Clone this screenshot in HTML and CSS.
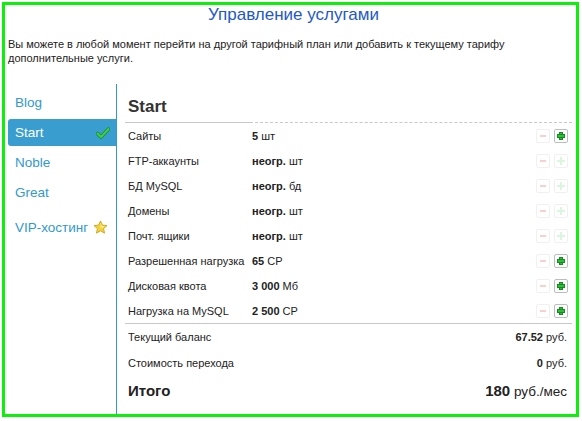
FILE: index.html
```html
<!DOCTYPE html>
<html>
<head>
<meta charset="utf-8">
<link rel="stylesheet" href="styles.css">
</head>
<body>
<div class="frame">
  <h1 class="title">Управление услугами</h1>
  <p class="intro">Вы можете в любой момент перейти на другой тарифный план или добавить к текущему тарифу дополнительные услуги.</p>
  <div class="main">
    <ul class="plans">
      <li class="plan">Blog</li>
      <li class="plan active">Start
        <svg class="check" width="14" height="12" viewBox="0 0 14 12"><path d="M1.5 6.5 L5 10 L12.5 2" fill="none" stroke="#1a8a2a" stroke-width="3.4" stroke-linecap="round" stroke-linejoin="round"/><path d="M1.5 6.5 L5 10 L12.5 2" fill="none" stroke="#3fd04a" stroke-width="2" stroke-linecap="round" stroke-linejoin="round"/></svg>
      </li>
      <li class="plan">Noble</li>
      <li class="plan">Great</li>
      <li class="plan vip">VIP-хостинг
        <svg class="star" width="15" height="15" viewBox="0 0 24 24"><path d="M12 1.5 L15.1 8.2 L22.4 8.9 L16.9 13.8 L18.5 21 L12 17.3 L5.5 21 L7.1 13.8 L1.6 8.9 L8.9 8.2 Z" fill="#f3d23c" stroke="#c9a218" stroke-width="1.4" stroke-linejoin="round"/><path d="M12 4.5 L14 9.6 L19 10 L15 13.3 L12 12 Z" fill="#fbef9a" opacity="0.8"/></svg>
      </li>
    </ul>
    <div class="content">
      <h2 class="plan-name">Start</h2>
      <div class="rule"><span class="solid"></span><span class="dashed"></span></div>
      <div class="rows">
        <div class="row"><span class="label">Сайты</span><span class="value"><b>5</b> шт</span><span class="btns"><span class="btn minus off"></span><span class="btn plus on"></span></span></div>
        <div class="row"><span class="label">FTP-аккаунты</span><span class="value"><b>неогр.</b> шт</span><span class="btns"><span class="btn minus off"></span><span class="btn plus off"></span></span></div>
        <div class="row"><span class="label">БД MySQL</span><span class="value"><b>неогр.</b> бд</span><span class="btns"><span class="btn minus off"></span><span class="btn plus off"></span></span></div>
        <div class="row"><span class="label">Домены</span><span class="value"><b>неогр.</b> шт</span><span class="btns"><span class="btn minus off"></span><span class="btn plus off"></span></span></div>
        <div class="row"><span class="label">Почт. ящики</span><span class="value"><b>неогр.</b> шт</span><span class="btns"><span class="btn minus off"></span><span class="btn plus off"></span></span></div>
        <div class="row"><span class="label">Разрешенная нагрузка</span><span class="value"><b>65</b> CP</span><span class="btns"><span class="btn minus off"></span><span class="btn plus on"></span></span></div>
        <div class="row"><span class="label">Дисковая квота</span><span class="value"><b>3 000</b> Мб</span><span class="btns"><span class="btn minus off"></span><span class="btn plus on"></span></span></div>
        <div class="row"><span class="label">Нагрузка на MySQL</span><span class="value"><b>2 500</b> CP</span><span class="btns"><span class="btn minus off"></span><span class="btn plus on"></span></span></div>
      </div>
      <div class="totals">
        <div class="trow"><span class="label">Текущий баланс</span><span class="sum"><b>67.52</b> руб.</span></div>
        <div class="trow"><span class="label">Стоимость перехода</span><span class="sum"><b>0</b> руб.</span></div>
        <div class="trow grand"><span class="label">Итого</span><span class="sum"><b>180</b> руб./мес</span></div>
      </div>
    </div>
  </div>
</div>
</body>
</html>
```
FILE: styles.css
```css
html, body { margin: 0; padding: 0; background: #fff; }
body { font-family: "Liberation Sans", Arial, sans-serif; color: #222; }
.frame {
  box-sizing: border-box;
  width: 577px; height: 415px;
  margin: 2px;
  border: 3px solid #0cf00c;
  padding: 0 3px;
  display: flex; flex-direction: column;
}
.title {
  margin: 0; font-size: 17px; line-height: 20px; font-weight: normal;
  color: #2358c6; text-align: center; padding-left: 6px;
}
.intro { margin: 12px 0 0; font-size: 11px; line-height: 14px; color: #222; }
.main { flex: 1; display: flex; margin-top: 19px; }
.plans {
  list-style: none; margin: 0; padding: 5px 0 0;
  width: 108px; border-right: 1px solid #3399cc;
  font-size: 13.5px; color: #3399cc;
}
.plan {
  height: 27px; margin-bottom: 3px; padding-left: 7px;
  display: flex; align-items: center; justify-content: space-between; padding-right: 6px;
}
.plan.active { background: #3a9dcf; color: #fff; border-radius: 3px 0 0 3px; }
.plan.vip { margin-top: 8px; padding-right: 8px; }
.check { display: block; }
.star { display: block; }
.content { flex: 1; padding: 0 1px 0 8px; }
.plan-name { margin: 13px 0 0; padding: 0 0 5px 3px; font-size: 17px; line-height: 20px; color: #333; }
.rule { display: flex; height: 1px; }
.solid { width: 125px; border-top: 1px solid #c8c8c8; }
.dashed { flex: 1; border-top: 1px dashed #c8c8c8; }
.rows { border-bottom: 1px solid #c8c8c8; }
.row, .trow { display: flex; align-items: center; height: 25px; padding: 0 4px 0 3px; font-size: 11px; }
.label { width: 124px; }
.value { flex: 1; }
.btns { display: flex; gap: 4px; }
.btn {
  box-sizing: border-box; width: 14px; height: 14px;
  border: 1px solid #f0f0f0; border-radius: 2px; position: relative; background: #fff;
}
.btn.on { border-color: #bdbdbd; }
.minus::after {
  content: ""; position: absolute; left: 3px; top: 5px; width: 6px; height: 2px;
  background: #f7d0d0;
}
.plus::before, .plus::after { content: ""; position: absolute; background: #dcf5df; }
.plus::before { left: 5px; top: 2px; width: 2px; height: 8px; }
.plus::after { left: 2px; top: 5px; width: 8px; height: 2px; }
.plus.on::before, .plus.on::after { background: #2ec03a; box-shadow: 0 0 0 1px #178a22; }
.plus.on::before { left: 5px; top: 3px; width: 2px; height: 6px; }
.plus.on::after { left: 3px; top: 5px; width: 6px; height: 2px; }
.trow { height: 26px; padding-right: 5px; }
.trow .label { flex: 1; }
.trow.grand { height: 28px; }
.grand .label { font-size: 15px; font-weight: bold; color: #222; }
.grand .sum { font-size: 13.5px; }
.grand .sum b { font-size: 15px; }
```
